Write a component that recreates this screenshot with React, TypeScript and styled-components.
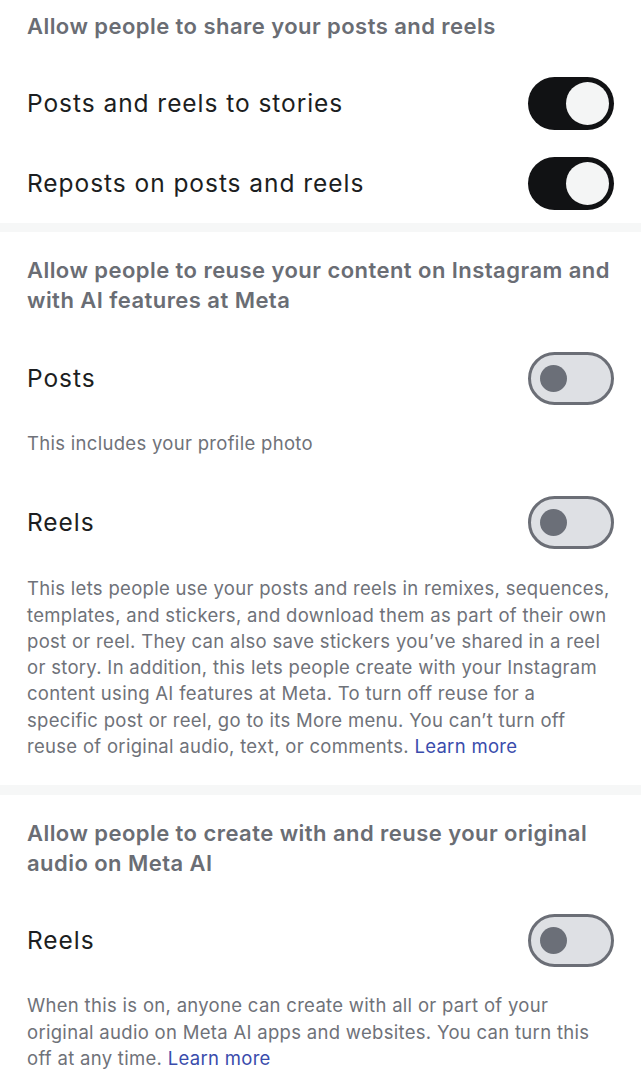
import React from "react";
import styled, { createGlobalStyle } from "styled-components";

const GlobalStyle = createGlobalStyle`
    body {
        margin: 0;
        background: #ffffff;
        font-family: Inter, "Noto Sans", sans-serif;
        -webkit-font-smoothing: antialiased;
    }
`;

const Page = styled.div`
    display: flex;
    flex-direction: column;
    width: 641px;
    background: #ffffff;
`;

const Section = styled.section<{ $top: number; $bottom: number }>`
    display: flex;
    flex-direction: column;
    padding: ${(p) => p.$top}px 27px ${(p) => p.$bottom}px;
`;

const Divider = styled.div<{ $h: number }>`
    height: ${(p) => p.$h}px;
    background: #f6f7f7;
`;

const Heading = styled.h2`
    margin: 0;
    font-size: 22px;
    line-height: 30px;
    font-weight: 600;
    color: #6a6d74;
    letter-spacing: 0.45px;
`;

const Row = styled.div<{ $h: number; $mt?: number }>`
    display: flex;
    align-items: center;
    justify-content: space-between;
    height: ${(p) => p.$h}px;
    margin-top: ${(p) => p.$mt ?? 0}px;
`;

const Label = styled.span`
    font-size: 24.5px;
    color: #1c1e21;
    letter-spacing: 0.95px;
`;

const Caption = styled.p<{ $mt: number }>`
    margin: ${(p) => p.$mt}px 0 0;
    font-size: 18.5px;
    line-height: 26.3px;
    color: #6f7279;
    letter-spacing: 0.3px;
`;

const Link = styled.a`
    color: #3a4cac;
    text-decoration: none;
`;

const Track = styled.div<{ $on: boolean }>`
    box-sizing: border-box;
    display: flex;
    align-items: center;
    justify-content: ${(p) => (p.$on ? "flex-end" : "flex-start")};
    width: 86px;
    height: 53px;
    border-radius: 27px;
    padding: ${(p) => (p.$on ? "0 5px" : "0 9px")};
    background: ${(p) => (p.$on ? "#111214" : "#dee0e4")};
    border: ${(p) => (p.$on ? "none" : "3px solid #6b6e76")};
`;

const Knob = styled.div<{ $on: boolean }>`
    width: ${(p) => (p.$on ? 43 : 27)}px;
    height: ${(p) => (p.$on ? 43 : 27)}px;
    border-radius: 50%;
    background: ${(p) => (p.$on ? "#f4f5f5" : "#6b6f78")};
`;

function Toggle({ on }: { on: boolean }) {
    return (
        <Track $on={on}>
            <Knob $on={on} />
        </Track>
    );
}

export default function App() {
    return (
        <Page>
            <GlobalStyle />
            <Section $top={11} $bottom={0}>
                <Heading>Allow people to share your posts and reels</Heading>
                <Row $h={80} $mt={22}>
                    <Label>Posts and reels to stories</Label>
                    <Toggle on />
                </Row>
                <Row $h={80}>
                    <Label>Reposts on posts and reels</Label>
                    <Toggle on />
                </Row>
            </Section>
            <Divider $h={9} />
            <Section $top={23} $bottom={26}>
                <Heading>
                    Allow people to reuse your content on Instagram and with AI features at Meta
                </Heading>
                <Row $h={70} $mt={28}>
                    <Label>Posts</Label>
                    <Toggle on={false} />
                </Row>
                <Caption $mt={17}>This includes your profile photo</Caption>
                <Row $h={70} $mt={31}>
                    <Label>Reels</Label>
                    <Toggle on={false} />
                </Row>
                <Caption $mt={18}>
                    This lets people use your posts and reels in remixes, sequences, templates,
                    and stickers, and download them as part of their own post or reel. They can
                    also save stickers you’ve shared in a reel or story. In addition, this lets
                    people create with your Instagram content using AI features at Meta. To turn
                    off reuse for a
                    <br />
                    specific post or reel, go to its More menu. You can’t turn off
                    <br />
                    reuse of original audio, text, or comments. <Link>Learn more</Link>
                </Caption>
            </Section>
            <Divider $h={10} />
            <Section $top={23} $bottom={20}>
                <Heading>Allow people to create with and reuse your original audio on Meta AI</Heading>
                <Row $h={70} $mt={27}>
                    <Label>Reels</Label>
                    <Toggle on={false} />
                </Row>
                <Caption $mt={17}>
                    When this is on, anyone can create with all or part of your original audio on
                    Meta AI apps and websites. You can turn this off at any time.{" "}
                    <Link>Learn more</Link>
                </Caption>
            </Section>
        </Page>
    );
}
